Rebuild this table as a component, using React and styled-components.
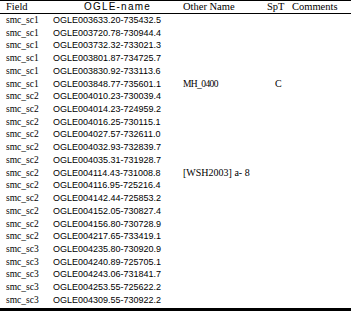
import React from "react";
import styled, { createGlobalStyle } from "styled-components";

const Global = createGlobalStyle`
  html, body { margin: 0; padding: 0; background: #fff; }
  body { width: 351px; height: 311px; overflow: hidden; }
`;

const Table = styled.div`
  width: 351px;
  display: flex;
  flex-direction: column;
  color: #000;
  border-top: 1px solid #000;
`;

const Row = styled.div`
  display: grid;
  grid-template-columns: 48px 130px 84px 25px 1fr;
  height: ${(p) => (p.$head ? "12px" : "12.73px")};
  line-height: ${(p) => (p.$head ? "12px" : "12.73px")};
  white-space: nowrap;
`;

const Rule = styled.div`
  height: ${(p) => p.$w}px;
  margin-top: ${(p) => p.$gap || 0}px;
  background: #000;
`;

const HeadCell = styled.div`
  font-family: ${(p) => (p.$sans ? '"Liberation Sans", Arial, sans-serif' : '"Liberation Serif", "Times New Roman", serif')};
  font-size: ${(p) => (p.$sans ? "10px" : "10.5px")};
  letter-spacing: ${(p) => (p.$sans ? "1.2px" : "0")};
  padding-left: ${(p) => p.$pad}px;
`;

const Cell = styled.div`
  font-family: "Liberation Serif", "Times New Roman", serif;
  font-size: ${(p) => p.$size || 9.5}px;
  letter-spacing: ${(p) => p.$ls || 0}px;
  padding-left: ${(p) => p.$pad}px;
`;

const Name = styled.div`
  font-family: "Liberation Sans", Arial, sans-serif;
  font-size: 9px;
  padding-left: 5px;
`;

const rows = [
  ["smc_sc1", "OGLE003633.20-735432.5"],
  ["smc_sc1", "OGLE003720.78-730944.4"],
  ["smc_sc1", "OGLE003732.32-733021.3"],
  ["smc_sc1", "OGLE003801.87-734725.7"],
  ["smc_sc1", "OGLE003830.92-733113.6"],
  ["smc_sc1", "OGLE003848.77-735601.1", "MH_0400", "C"],
  ["smc_sc2", "OGLE004010.23-730039.4"],
  ["smc_sc2", "OGLE004014.23-724959.2"],
  ["smc_sc2", "OGLE004016.25-730115.1"],
  ["smc_sc2", "OGLE004027.57-732611.0"],
  ["smc_sc2", "OGLE004032.93-732839.7"],
  ["smc_sc2", "OGLE004035.31-731928.7"],
  ["smc_sc2", "OGLE004114.43-731008.8", "[WSH2003] a- 8"],
  ["smc_sc2", "OGLE004116.95-725216.4"],
  ["smc_sc2", "OGLE004142.44-725853.2"],
  ["smc_sc2", "OGLE004152.05-730827.4"],
  ["smc_sc2", "OGLE004156.80-730728.9"],
  ["smc_sc2", "OGLE004217.65-733419.1"],
  ["smc_sc3", "OGLE004235.80-730920.9"],
  ["smc_sc3", "OGLE004240.89-725705.1"],
  ["smc_sc3", "OGLE004243.06-731841.7"],
  ["smc_sc3", "OGLE004253.55-725622.2"],
  ["smc_sc3", "OGLE004309.55-730922.2"],
];

export default function App() {
  return (
    <>
      <Global />
      <Table>
        <Row $head>
          <HeadCell $pad={6}>Field</HeadCell>
          <HeadCell $sans $pad={36}>OGLE-name</HeadCell>
          <HeadCell $pad={5}>Other Name</HeadCell>
          <HeadCell $pad={5}>SpT</HeadCell>
          <HeadCell $pad={5}>Comments</HeadCell>
        </Row>
        <Rule $w={1} />
        {rows.map(([field, name, other, spt], i) => (
          <Row key={i}>
            <Cell $pad={6}>{field}</Cell>
            <Name>{name}</Name>
            {other && other.startsWith("MH") ? (
              <Cell $pad={5} $ls={-0.6}>{other}</Cell>
            ) : (
              <Cell $pad={5} $size={10}>{other || ""}</Cell>
            )}
            <Cell $pad={13} $size={10}>{spt || ""}</Cell>
            <Cell $pad={5} />
          </Row>
        ))}
        <Rule $w={3} $gap={1} />
      </Table>
    </>
  );
}
